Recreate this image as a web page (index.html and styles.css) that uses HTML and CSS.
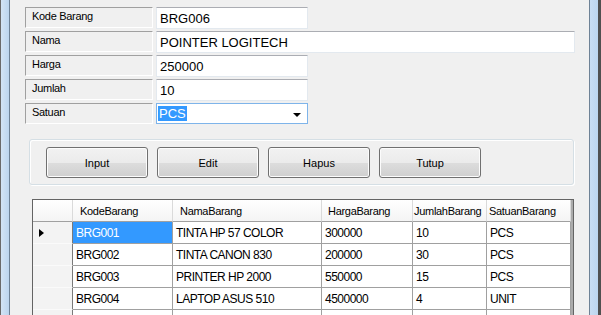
FILE: index.html
```html
<!DOCTYPE html>
<html lang="id">
<head>
    <meta charset="UTF-8">
    <title>Data Barang</title>
    <link rel="stylesheet" href="styles.css">
</head>
<body>
    <div id="window">
        <div class="frame-left"></div>
        <div class="client">
            <div class="form">
                <div class="form-row">
                    <div class="label">Kode Barang</div>
                    <div class="textbox">BRG006</div>
                </div>
                <div class="form-row">
                    <div class="label">Nama</div>
                    <div class="textbox wide">POINTER LOGITECH</div>
                </div>
                <div class="form-row">
                    <div class="label">Harga</div>
                    <div class="textbox">250000</div>
                </div>
                <div class="form-row">
                    <div class="label">Jumlah</div>
                    <div class="textbox">10</div>
                </div>
                <div class="form-row">
                    <div class="label">Satuan</div>
                    <div class="combo">
                        <span class="combo-sel">PCS</span>
                        <span class="combo-arrow"></span>
                    </div>
                </div>
            </div>

            <div class="btn-group">
                <div class="btn">Input</div>
                <div class="btn">Edit</div>
                <div class="btn">Hapus</div>
                <div class="btn">Tutup</div>
            </div>

            <div class="grid">
                <table>
                    <tr class="head">
                        <th class="rh"></th>
                        <th class="c-kode">KodeBarang</th>
                        <th class="c-nama">NamaBarang</th>
                        <th class="c-harga">HargaBarang</th>
                        <th class="c-jml">JumlahBarang</th>
                        <th class="c-sat">SatuanBarang</th>
                    </tr>
                    <tr>
                        <td class="rh"><span class="cursor"></span></td>
                        <td class="selected">BRG001</td>
                        <td>TINTA HP 57 COLOR</td>
                        <td>300000</td>
                        <td>10</td>
                        <td>PCS</td>
                    </tr>
                    <tr>
                        <td class="rh"></td>
                        <td>BRG002</td>
                        <td>TINTA CANON 830</td>
                        <td>200000</td>
                        <td>30</td>
                        <td>PCS</td>
                    </tr>
                    <tr>
                        <td class="rh"></td>
                        <td>BRG003</td>
                        <td>PRINTER HP 2000</td>
                        <td>550000</td>
                        <td>15</td>
                        <td>PCS</td>
                    </tr>
                    <tr>
                        <td class="rh"></td>
                        <td>BRG004</td>
                        <td>LAPTOP ASUS 510</td>
                        <td>4500000</td>
                        <td>4</td>
                        <td>UNIT</td>
                    </tr>
                    <tr>
                        <td class="rh"></td>
                        <td></td>
                        <td></td>
                        <td></td>
                        <td></td>
                        <td></td>
                    </tr>
                </table>
            </div>
        </div>
        <div class="frame-right"></div>
    </div>
</body>
</html>
```

FILE: styles.css
```css
*{
    margin: 0;
    padding: 0;
    box-sizing: border-box;
}
html, body{
    width: 601px;
    height: 315px;
    overflow: hidden;
    background: #f0f0f0;
}
#window{
    display: flex;
    height: 315px;
    font-family: "Liberation Sans", Arial, sans-serif;
    font-size: 11px;
    color: #000;
}
.frame-left{
    width: 10px;
    background: linear-gradient(to right, #d3e4f5, #bcd5ee);
    border-left: 1px solid #6a6a6a;
    border-right: 1px solid #6e8296;
}
.frame-right{
    width: 12px;
    background: linear-gradient(to right, #c9ddf2, #bcd5ee);
    border-left: 1px solid #6e8296;
    border-right: 3px solid #505050;
}
.client{
    flex: 1;
    padding: 7px 0 0 15px;
    overflow: hidden;
}

/* form */
.form{
    display: flex;
    flex-direction: column;
    gap: 3px;
}
.form-row{
    display: flex;
    gap: 3px;
    height: 21px;
}
.label{
    width: 128px;
    height: 21px;
    padding: 1px 0 0 6px;
    border-top: 1px solid #a0a0a0;
    border-left: 1px solid #a0a0a0;
    border-bottom: 1px solid #ffffff;
    border-right: 1px solid #ffffff;
    line-height: 14px;
    letter-spacing: -0.3px;
}
.textbox{
    width: 152px;
    height: 22px;
    background: #fff;
    border: 1px solid #e3e9ef;
    border-top-color: #abadb3;
    padding: 0 0 0 3px;
    font-size: 13px;
    line-height: 21px;
}
.textbox.wide{
    width: 419px;
}
.combo{
    width: 152px;
    height: 21px;
    background: #fff;
    border: 1px solid #7eb4ea;
    display: flex;
    align-items: center;
    justify-content: space-between;
    padding: 0 6px 0 1px;
    font-size: 13px;
}
.combo-sel{
    background: #3399ff;
    color: #fff;
    line-height: 15px;
    padding: 0 1px;
}
.combo-arrow{
    width: 0;
    height: 0;
    border-left: 4px solid transparent;
    border-right: 4px solid transparent;
    border-top: 4px solid #000;
    margin-top: 2px;
}

/* buttons */
.btn-group{
    display: flex;
    gap: 9px;
    width: 545px;
    height: 46px;
    margin: 15px 0 0 4px;
    padding: 7px 0 0 16px;
    border: 1px solid #d5dfe5;
    border-radius: 3px;
    box-shadow: inset 1px 1px 0 #fff, 1px 1px 0 #fff;
}
.btn{
    width: 102px;
    height: 31px;
    border: 1px solid #707070;
    border-radius: 3px;
    background: linear-gradient(#f2f2f2 0%, #ebebeb 50%, #dddddd 51%, #cfcfcf 100%);
    box-shadow: inset 0 0 0 1px #fcfcfc;
    display: flex;
    align-items: center;
    justify-content: center;
}

/* data grid */
.grid{
    width: 542px;
    height: 130px;
    margin: 14px 0 0 7px;
    background: #ababab;
    border: 1px solid #646464;
    border-bottom: none;
    overflow: hidden;
}
.grid table{
    border-collapse: separate;
    border-spacing: 0;
    table-layout: fixed;
    font-size: 12px;
    letter-spacing: -0.5px;
}
.grid td, .grid th{
    height: 22px;
    padding: 0 0 0 3px;
    text-align: left;
    background: #fff;
    border-right: 1px solid #a0a0a0;
    border-bottom: 1px solid #a0a0a0;
    white-space: nowrap;
    overflow: hidden;
    font-weight: normal;
}
.grid tr.head th{
    font-size: 11px;
    letter-spacing: -0.3px;
    height: 22px;
    padding-left: 7px;
    background: linear-gradient(#ffffff, #f4f4f4);
    border-right: 1px solid #dadada;
    border-bottom: 1px solid #a0a0a0;
}
.grid tr.head th.c-harga{ padding-left: 6px; }
.grid tr.head th.c-jml{ padding-left: 1px; }
.grid tr.head th.c-sat{ padding-left: 2px; }
.grid .rh{
    width: 40px;
    background: #f3f3f3;
    border-right: 1px solid #7a7a7a;
    border-bottom: 1px solid #fafafa;
    position: relative;
}
.grid tr.head .rh{
    border-right: 1px solid #dadada;
    border-bottom: 1px solid #a0a0a0;
}
.c-kode{ width: 100px; }
.c-nama{ width: 149px; }
.c-harga{ width: 91px; }
.c-jml{ width: 74px; }
.c-sat{ width: 84px; }
.grid td.selected{
    background: #3399ff;
    color: #fff;
}
.cursor{
    position: absolute;
    left: 6px;
    top: 7px;
    width: 0;
    height: 0;
    border-top: 4px solid transparent;
    border-bottom: 4px solid transparent;
    border-left: 5px solid #000;
}
```
